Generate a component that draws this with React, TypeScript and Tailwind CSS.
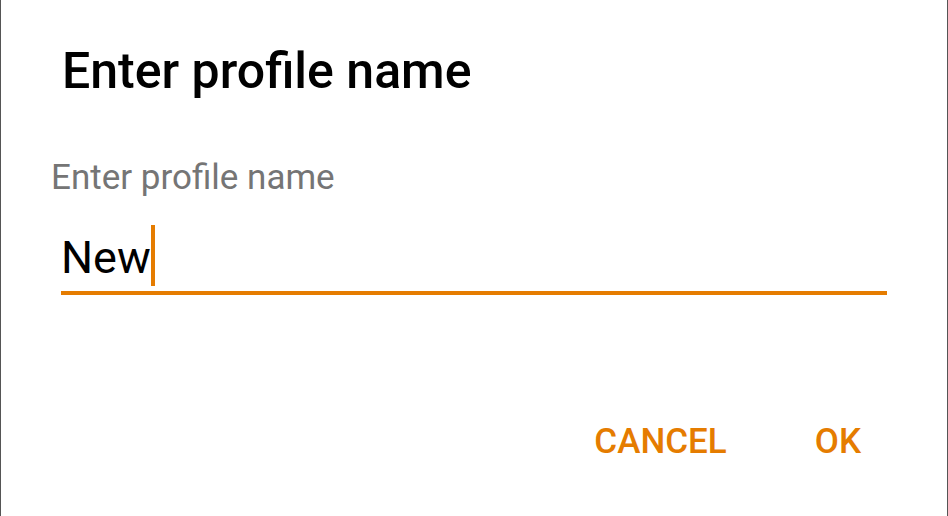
export default function App() {
  return (
    <div className="w-[948px] h-[516px] bg-white border-x border-[#555555] flex flex-col font-['Roboto',sans-serif] overflow-hidden">
      {/* title */}
      <div className="pl-[61px] pt-[43px]">
        <h1 className="text-[50px] leading-[56px] font-medium text-black">Enter profile name</h1>
      </div>

      {/* input field */}
      <div className="pl-[50px] pr-[60px] pt-[59px]">
        <label className="block text-[35px] leading-[40px] text-[#757575]">Enter profile name</label>
        <div className="ml-[10px] mt-[27px] border-b-[4px] border-[#e57c00] h-[70px] flex items-start">
          <span className="text-[45px] leading-[52px] text-black pt-[7px]">New</span>
          <span className="w-[4px] h-[61px] bg-[#e57c00]" />
        </div>
      </div>

      {/* actions */}
      <div className="flex-1 flex justify-end items-end pb-[56px] pr-[86px] gap-[88px]">
        <button className="text-[35px] leading-[36px] font-medium text-[#e57c00]">CANCEL</button>
        <button className="text-[35px] leading-[36px] font-medium text-[#e57c00]">OK</button>
      </div>
    </div>
  )
}
